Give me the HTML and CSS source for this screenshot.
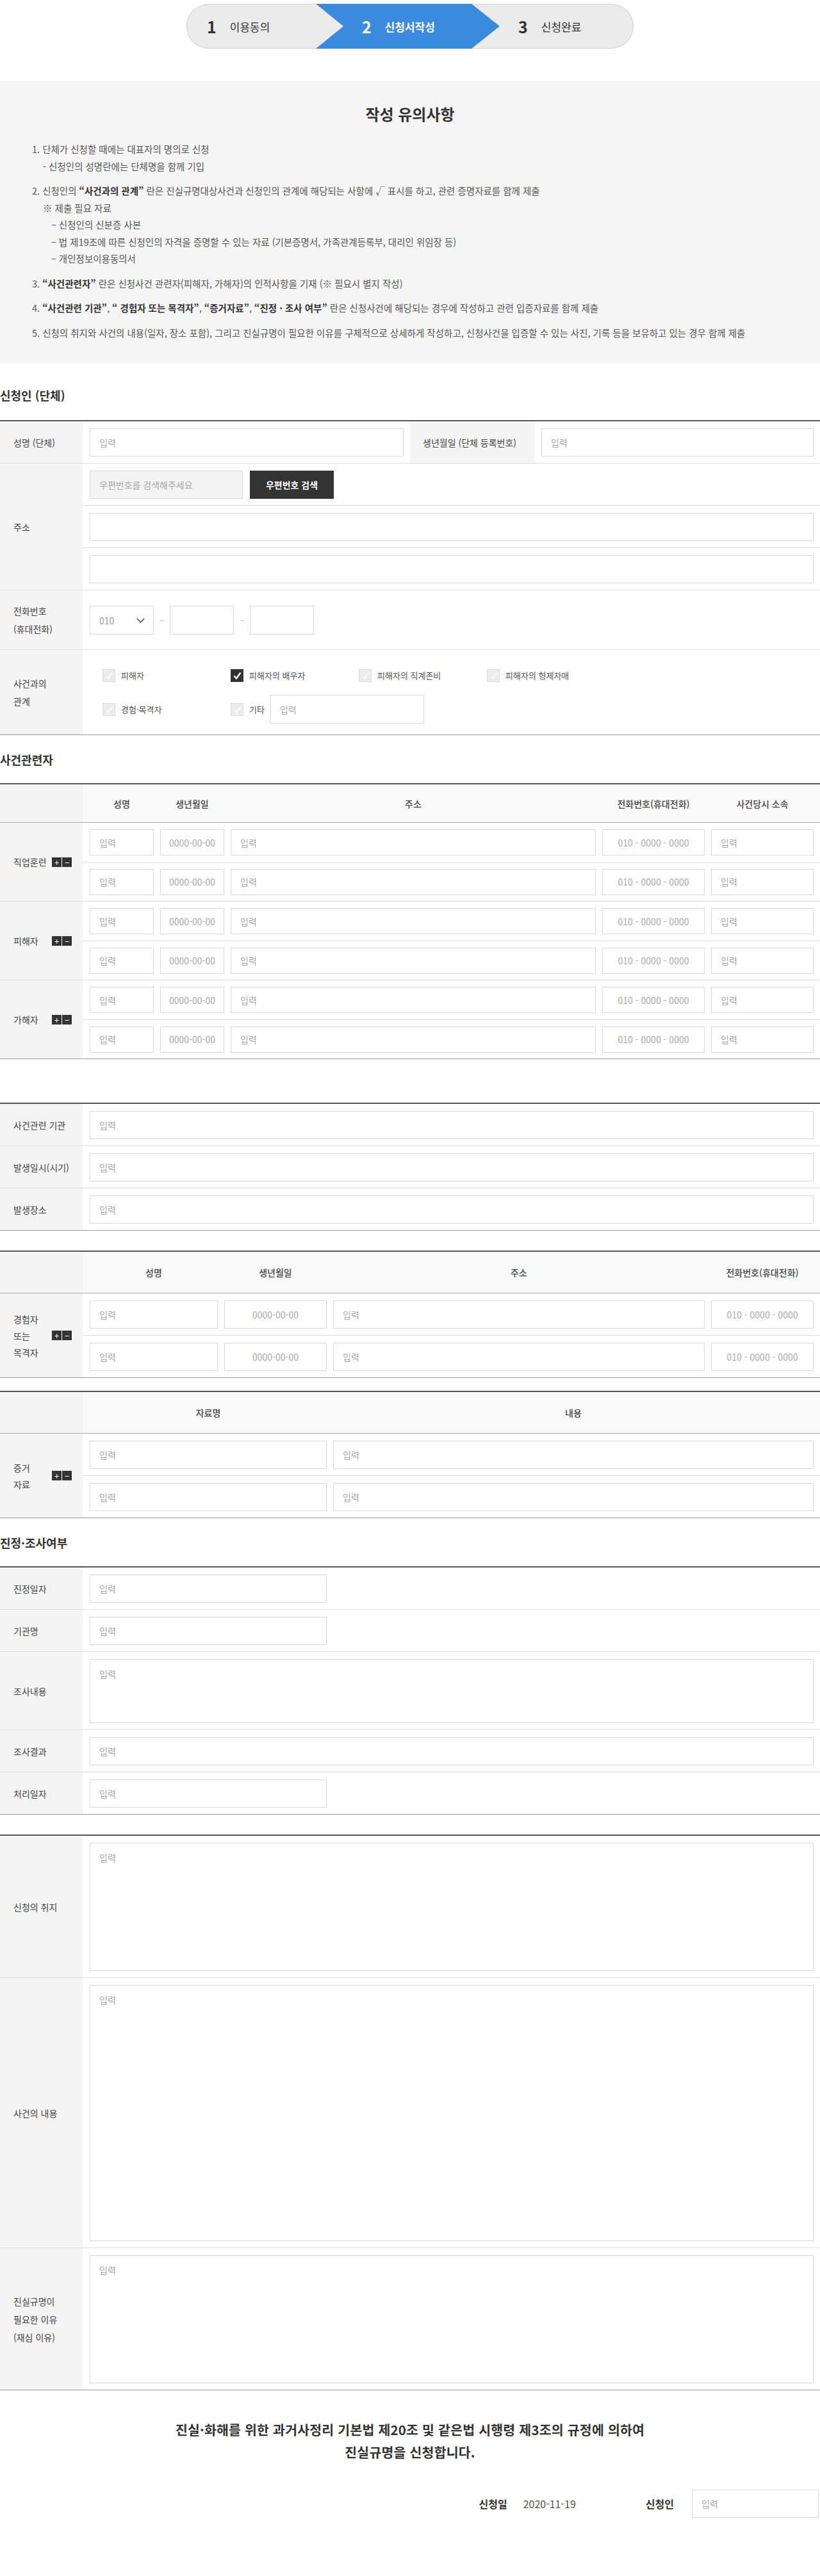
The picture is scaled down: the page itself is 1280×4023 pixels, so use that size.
FILE: index.html
```html
<!DOCTYPE html>
<html lang="ko">
<head>
<meta charset="utf-8">
<title>진실규명 신청서 작성</title>
<link rel="stylesheet" href="styles.css">
</head>
<body>
<div class="page">
  <nav class="steps">
    <div class="step s1"><b class="num">1</b><span class="txt">이용동의</span></div>
    <div class="step s2"><b class="num">2</b><span class="txt">신청서작성</span></div>
    <div class="step s3"><b class="num">3</b><span class="txt">신청완료</span></div>
  </nav>

  <section class="notice">
    <h2 class="notice-title">작성 유의사항</h2>
    <div class="notice-list">
      <div class="ni">
        <p>1. 단체가 신청할 때에는 대표자의 명의로 신청</p>
        <p class="ind1">- 신청인의 성명란에는 단체명을 함께 기입</p>
      </div>
      <div class="ni">
        <p>2. 신청인의 <b>“사건과의 관계”</b> 란은 진실규명대상사건과 신청인의 관계에 해당되는 사항에 √ 표시를 하고, 관련 증명자료를 함께 제출</p>
        <p class="ind1">※ 제출 필요 자료</p>
        <p class="ind2">– 신청인의 신분증 사본</p>
        <p class="ind2">– 법 제19조에 따른 신청인의 자격을 증명할 수 있는 자료 (기본증명서, 가족관계등록부, 대리인 위임장 등)</p>
        <p class="ind2">– 개인정보이용동의서</p>
      </div>
      <div class="ni">
        <p>3. <b>“사건관련자”</b> 란은 신청사건 관련자(피해자, 가해자)의 인적사항을 기재 (※ 필요시 별지 작성)</p>
      </div>
      <div class="ni">
        <p>4. <b>“사건관련 기관”</b>, <b>“ 경험자 또는 목격자”</b>, <b>“증거자료”</b>, <b>“진정 · 조사 여부”</b> 란은 신청사건에 해당되는 경우에 작성하고 관련 입증자료를 함께 제출</p>
      </div>
      <div class="ni">
        <p>5. 신청의 취지와 사건의 내용(일자, 장소 포함), 그리고 진실규명이 필요한 이유를 구체적으로 상세하게 작성하고, 신청사건을 입증할 수 있는 사진, 기록 등을 보유하고 있는 경우 함께 제출</p>
      </div>
    </div>
  </section>

  <h3 class="sec-title first">신청인 (단체)</h3>
  <div class="ftable">
    <div class="row">
      <div class="th">성명 (단체)</div>
      <div class="td td-half"><input class="inp" placeholder="입력"></div>
      <div class="th th-mid">생년월일 (단체 등록번호)</div>
      <div class="td td-rest"><input class="inp" placeholder="입력"></div>
    </div>
    <div class="row">
      <div class="th">주소</div>
      <div class="tdg">
        <div class="sub"><input class="inp zip" placeholder="우편번호를 검색해주세요"><button class="btn-dark" type="button">우편번호 검색</button></div>
        <div class="sub"><input class="inp"></div>
        <div class="sub"><input class="inp"></div>
      </div>
    </div>
    <div class="row">
      <div class="th th-2l">전화번호<br>(휴대전화)</div>
      <div class="td phone">
        <div class="sel"><span>010</span><svg width="13" height="8" viewBox="0 0 13 8"><polyline points="1,1 6.5,7 12,1" fill="none" stroke="#444" stroke-width="1.4"/></svg></div>
        <span class="dash">-</span>
        <input class="inp ph">
        <span class="dash">-</span>
        <input class="inp ph">
      </div>
    </div>
    <div class="row">
      <div class="th th-2l">사건과의<br>관계</div>
      <div class="td rel">
        <div class="chk-grid">
          <label class="chk"><span class="box"><svg width="13" height="12" viewBox="0 0 13 12"><path d="M1.5 6.5 L5 10.5 L11.5 1.5" fill="none" stroke="#fff" stroke-width="1.6"/></svg></span>피해자</label>
          <label class="chk"><span class="box on"><svg width="13" height="12" viewBox="0 0 13 12"><path d="M1.5 6.5 L5 10.5 L11.5 1.5" fill="none" stroke="#fff" stroke-width="2.4"/></svg></span>피해자의 배우자</label>
          <label class="chk"><span class="box"><svg width="13" height="12" viewBox="0 0 13 12"><path d="M1.5 6.5 L5 10.5 L11.5 1.5" fill="none" stroke="#fff" stroke-width="1.6"/></svg></span>피해자의 직계존비</label>
          <label class="chk"><span class="box"><svg width="13" height="12" viewBox="0 0 13 12"><path d="M1.5 6.5 L5 10.5 L11.5 1.5" fill="none" stroke="#fff" stroke-width="1.6"/></svg></span>피해자의 형제자매</label>
          <label class="chk"><span class="box"><svg width="13" height="12" viewBox="0 0 13 12"><path d="M1.5 6.5 L5 10.5 L11.5 1.5" fill="none" stroke="#fff" stroke-width="1.6"/></svg></span>경험·목격자</label>
          <label class="chk chk-etc"><span class="box"><svg width="13" height="12" viewBox="0 0 13 12"><path d="M1.5 6.5 L5 10.5 L11.5 1.5" fill="none" stroke="#fff" stroke-width="1.6"/></svg></span>기타<input class="inp etc" placeholder="입력"></label>
        </div>
      </div>
    </div>
  </div>

  <h3 class="sec-title">사건관련자</h3>
  <div class="ftable t-rel">
    <div class="row head">
      <div class="th"></div>
      <div class="td hd"><div class="g5 hcols"><span>성명</span><span>생년월일</span><span>주소</span><span>전화번호(휴대전화)</span><span>사건당시 소속</span></div></div>
    </div>
    <div class="row">
      <div class="th gth"><span>직업훈련</span><span class="pm"><i>+</i><i>−</i></span></div>
      <div class="tdg">
        <div class="sub sm g5"><input class="inp" placeholder="입력"><input class="inp c" placeholder="0000-00-00"><input class="inp" placeholder="입력"><input class="inp c" placeholder="010 - 0000 - 0000"><input class="inp" placeholder="입력"></div>
        <div class="sub sm g5"><input class="inp" placeholder="입력"><input class="inp c" placeholder="0000-00-00"><input class="inp" placeholder="입력"><input class="inp c" placeholder="010 - 0000 - 0000"><input class="inp" placeholder="입력"></div>
      </div>
    </div>
    <div class="row">
      <div class="th gth"><span>피해자</span><span class="pm"><i>+</i><i>−</i></span></div>
      <div class="tdg">
        <div class="sub sm g5"><input class="inp" placeholder="입력"><input class="inp c" placeholder="0000-00-00"><input class="inp" placeholder="입력"><input class="inp c" placeholder="010 - 0000 - 0000"><input class="inp" placeholder="입력"></div>
        <div class="sub sm g5"><input class="inp" placeholder="입력"><input class="inp c" placeholder="0000-00-00"><input class="inp" placeholder="입력"><input class="inp c" placeholder="010 - 0000 - 0000"><input class="inp" placeholder="입력"></div>
      </div>
    </div>
    <div class="row">
      <div class="th gth"><span>가해자</span><span class="pm"><i>+</i><i>−</i></span></div>
      <div class="tdg">
        <div class="sub sm g5"><input class="inp" placeholder="입력"><input class="inp c" placeholder="0000-00-00"><input class="inp" placeholder="입력"><input class="inp c" placeholder="010 - 0000 - 0000"><input class="inp" placeholder="입력"></div>
        <div class="sub sm g5"><input class="inp" placeholder="입력"><input class="inp c" placeholder="0000-00-00"><input class="inp" placeholder="입력"><input class="inp c" placeholder="010 - 0000 - 0000"><input class="inp" placeholder="입력"></div>
      </div>
    </div>
  </div>

  <div class="ftable t-org">
    <div class="row"><div class="th">사건관련 기관</div><div class="td"><input class="inp" placeholder="입력"></div></div>
    <div class="row"><div class="th">발생일시(시기)</div><div class="td"><input class="inp" placeholder="입력"></div></div>
    <div class="row"><div class="th">발생장소</div><div class="td"><input class="inp" placeholder="입력"></div></div>
  </div>

  <div class="ftable t-wit">
    <div class="row head tall">
      <div class="th"></div>
      <div class="td hd"><div class="g4 hcols"><span>성명</span><span>생년월일</span><span>주소</span><span>전화번호(휴대전화)</span></div></div>
    </div>
    <div class="row">
      <div class="th gth th-3l"><span>경험자<br>또는<br>목격자</span><span class="pm"><i>+</i><i>−</i></span></div>
      <div class="tdg">
        <div class="sub g4"><input class="inp" placeholder="입력"><input class="inp c" placeholder="0000-00-00"><input class="inp" placeholder="입력"><input class="inp c" placeholder="010 - 0000 - 0000"></div>
        <div class="sub g4"><input class="inp" placeholder="입력"><input class="inp c" placeholder="0000-00-00"><input class="inp" placeholder="입력"><input class="inp c" placeholder="010 - 0000 - 0000"></div>
      </div>
    </div>
  </div>

  <div class="ftable t-evi">
    <div class="row head tall">
      <div class="th"></div>
      <div class="td hd"><div class="g2 hcols"><span>자료명</span><span>내용</span></div></div>
    </div>
    <div class="row">
      <div class="th gth th-3l"><span>증거<br>자료</span><span class="pm"><i>+</i><i>−</i></span></div>
      <div class="tdg">
        <div class="sub g2"><input class="inp" placeholder="입력"><input class="inp" placeholder="입력"></div>
        <div class="sub g2"><input class="inp" placeholder="입력"><input class="inp" placeholder="입력"></div>
      </div>
    </div>
  </div>

  <h3 class="sec-title">진정·조사여부</h3>
  <div class="ftable">
    <div class="row"><div class="th">진정일자</div><div class="td"><input class="inp short" placeholder="입력"></div></div>
    <div class="row"><div class="th">기관명</div><div class="td"><input class="inp short" placeholder="입력"></div></div>
    <div class="row"><div class="th">조사내용</div><div class="td"><textarea class="ta ta-s" placeholder="입력"></textarea></div></div>
    <div class="row"><div class="th">조사결과</div><div class="td"><input class="inp" placeholder="입력"></div></div>
    <div class="row"><div class="th">처리일자</div><div class="td"><input class="inp short" placeholder="입력"></div></div>
  </div>

  <div class="ftable t-txt">
    <div class="row"><div class="th">신청의 취지</div><div class="td"><textarea class="ta ta-m" placeholder="입력"></textarea></div></div>
    <div class="row"><div class="th">사건의 내용</div><div class="td"><textarea class="ta ta-l" placeholder="입력"></textarea></div></div>
    <div class="row"><div class="th th-2l">진실규명이<br>필요한 이유<br>(재심 이유)</div><div class="td"><textarea class="ta ta-m" placeholder="입력"></textarea></div></div>
  </div>

  <p class="declare">진실·화해를 위한 과거사정리 기본법 제20조 및 같은법 시행령 제3조의 규정에 의하여<br>진실규명을 신청합니다.</p>

  <div class="sign">
    <span class="sign-lb">신청일</span>
    <span class="sign-date">2020-11-19</span>
    <span class="sign-lb sign-lb2">신청인</span>
    <input class="inp sign-inp" placeholder="입력">
  </div>
</div>
</body>
</html>
```

FILE: styles.css
```css
* { box-sizing: border-box; margin: 0; padding: 0; }
html, body { background: #fff; }
body {
  font-family: "Noto Sans CJK KR", "Noto Sans", sans-serif;
  font-size: 14px;
  color: #333;
}
.page { width: 1280px; padding-bottom: 93px; }

/* steps */
.steps {
  width: 698px;
  height: 70px;
  margin: 6px auto 0;
  display: flex;
  border-radius: 35px;
  background: #ebebeb;
  box-shadow: inset 0 0 0 1px #d3d3d3;
  overflow: hidden;
}
.step { display: flex; align-items: center; color: #333; }
.s1 { width: 202px; flex: none; padding-left: 32px; }
.s2 {
  width: 287px;
  flex: none;
  padding-left: 72px;
  background: #3a8add;
  color: #fff;
  clip-path: polygon(0 0, 243px 0, 100% 50%, 243px 100%, 0 100%, 43px 50%);
}
.s3 { flex: 1; margin-left: -44px; padding-left: 73px; }
.num { font-size: 25px; font-weight: 700; line-height: 1; margin-right: 21px; }
.txt { font-size: 17px; line-height: 1; }
.s2 .txt { font-weight: 700; }

/* notice */
.notice {
  margin-top: 50px;
  background: #f5f5f5;
  padding: 38px 50px 34px;
}
.notice-title {
  text-align: center;
  font-size: 24px;
  line-height: 28px;
  font-weight: 700;
  color: #333;
}
.notice-list {
  margin-top: 28px;
  font-size: 14.5px;
  line-height: 26.5px;
  color: #555;
}
.ni + .ni { margin-top: 12px; }
.ni b { color: #333; font-weight: 700; }
.ind1 { padding-left: 17px; }
.ind2 { padding-left: 30px; }

/* section titles */
.sec-title {
  font-size: 18px;
  line-height: 26px;
  font-weight: 700;
  color: #333;
  margin: 25px 0 24px;
}
.sec-title.first { margin-top: 37px; margin-bottom: 26px; }

/* form tables */
.ftable { border-top: 2px solid #555; border-bottom: 1px solid #999; }
.row { display: flex; border-bottom: 1px solid #ddd; }
.row:last-child { border-bottom: 0; }
.row.head { border-bottom: 1px solid #aaa; height: 60px; }
.row.head.tall { height: 65px; }
.th {
  width: 129px;
  flex: none;
  background: #f4f4f4;
  display: flex;
  align-items: center;
  padding-left: 21px;
  font-size: 14px;
  line-height: 28px;
  color: #444;
}
.th-2l { padding-top: 18px; padding-bottom: 18px; }
.th-mid { width: 195px; padding-left: 20px; }
.td {
  flex: 1;
  min-width: 0;
  display: flex;
  align-items: center;
  padding: 11px 10px 10px 11px;
}
.td-half { flex: none; width: 511px; }
.td-rest { padding-left: 10px; }
.tdg { flex: 1; min-width: 0; display: flex; flex-direction: column; }
.sub {
  display: flex;
  align-items: center;
  gap: 11px;
  padding: 11px 10px 10px 11px;
}
.sub + .sub { border-top: 1px solid #ddd; }
.sub.sm { padding: 10px 10px 9.5px 11px; }
.sub.sm .inp { height: 41px; }

.inp {
  display: block;
  width: 100%;
  height: 44px;
  border: 1px solid #d9d9d9;
  background: #fff;
  padding: 0 14px;
  font-family: inherit;
  font-size: 14px;
  color: #333;
  outline: none;
  border-radius: 0;
}
.inp::placeholder { color: #a8a8a8; }
.inp.c { text-align: center; padding: 0 6px; }
.inp.zip { width: 239px; flex: none; background: #f4f4f4; }
.inp.short { width: 370px; }
.btn-dark {
  width: 131px;
  height: 44px;
  flex: none;
  border: 0;
  background: #333;
  color: #fff;
  font-family: inherit;
  font-size: 14px;
  font-weight: 700;
}

/* phone */
.phone { gap: 10px; }
.sel {
  width: 100px;
  height: 45px;
  flex: none;
  border: 1px solid #d9d9d9;
  display: flex;
  align-items: center;
  justify-content: space-between;
  padding: 0 13px 0 14px;
  color: #999;
  font-size: 14px;
}
.dash { color: #999; font-size: 13px; width: 5px; text-align: center; }
.inp.ph { width: 100px; height: 45px; flex: none; }

/* relation checkboxes */
.td.rel { padding: 17px 11px 17px 31px; }
.chk-grid {
  display: grid;
  grid-template-columns: repeat(4, 200px);
  grid-auto-rows: 45px;
  row-gap: 8px;
}
.chk {
  display: flex;
  align-items: center;
  gap: 9px;
  font-size: 13px;
  color: #555;
  white-space: nowrap;
}
.box {
  width: 20px;
  height: 20px;
  flex: none;
  border: 1px solid #dcdcdc;
  background: #ececec;
  display: flex;
  align-items: center;
  justify-content: center;
}
.box.on { background: #333; border-color: #333; }
.inp.etc { width: 240px; height: 45px; flex: none; }

/* grids */
.g5, .g4, .g2 { display: grid; width: 100%; column-gap: 10px; }
.g5 { grid-template-columns: 100px 100px 1fr 160px 160px; }
.g4 { grid-template-columns: 200px 160px 1fr 160px; }
.g2 { grid-template-columns: 370px 1fr; }
.head .td { background: #f9f9f9; padding-top: 0; padding-bottom: 0; }
.hcols span {
  text-align: center;
  font-size: 14px;
  font-weight: 500;
  color: #444;
}

/* group label */
.gth { justify-content: space-between; padding-right: 17px; }
.th-3l { line-height: 26px; }
.pm { display: flex; gap: 1px; }
.pm i {
  width: 15px;
  height: 15px;
  background: #333;
  color: #fff;
  font-style: normal;
  font-size: 13px;
  line-height: 15px;
  text-align: center;
}

.t-org { margin-top: 68px; }
.t-wit { margin-top: 31px; }
.t-evi { margin-top: 20px; }
.t-txt { margin-top: 31px; }

.ta {
  display: block;
  width: 100%;
  border: 1px solid #d9d9d9;
  padding: 12px 14px;
  font-family: inherit;
  font-size: 14px;
  line-height: 20px;
  color: #333;
  resize: none;
  outline: none;
  border-radius: 0;
}
.ta::placeholder { color: #a8a8a8; }
.ta-s { height: 100px; }
.ta-m { height: 200px; }
.ta-l { height: 400px; }

/* declaration */
.declare {
  margin-top: 44px;
  text-align: center;
  font-size: 20.5px;
  line-height: 35px;
  letter-spacing: 0.2px;
  font-weight: 700;
  color: #333;
}
.sign {
  margin-top: 41px;
  display: flex;
  justify-content: flex-end;
  align-items: center;
  padding-right: 2px;
}
.sign-lb { font-size: 16px; font-weight: 700; color: #333; }
.sign-date { margin-left: 25px; font-size: 16px; color: #555; }
.sign-lb2 { margin-left: 109px; }
.inp.sign-inp { width: 198px; margin-left: 28px; flex: none; }
```
